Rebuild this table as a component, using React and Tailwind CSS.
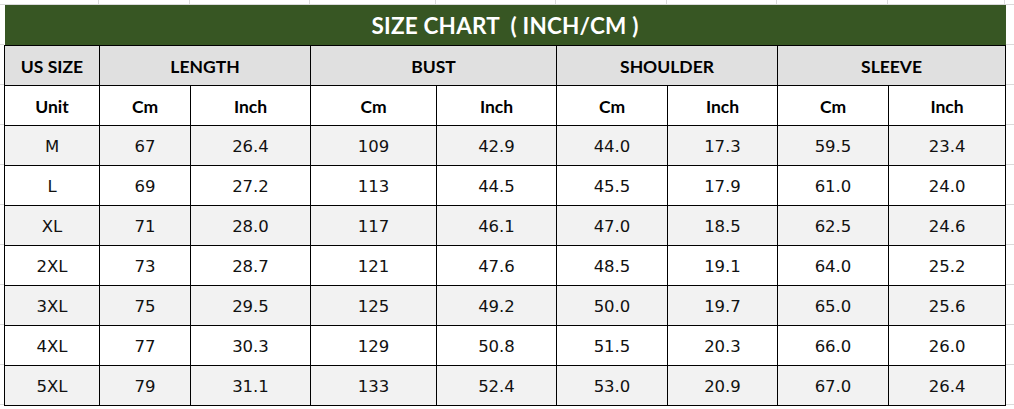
const cols = [95, 91, 120, 126, 120, 111, 110, 111, 117];

const rows = [
  ["M", "67", "26.4", "109", "42.9", "44.0", "17.3", "59.5", "23.4"],
  ["L", "69", "27.2", "113", "44.5", "45.5", "17.9", "61.0", "24.0"],
  ["XL", "71", "28.0", "117", "46.1", "47.0", "18.5", "62.5", "24.6"],
  ["2XL", "73", "28.7", "121", "47.6", "48.5", "19.1", "64.0", "25.2"],
  ["3XL", "75", "29.5", "125", "49.2", "50.0", "19.7", "65.0", "25.6"],
  ["4XL", "77", "30.3", "129", "50.8", "51.5", "20.3", "66.0", "26.0"],
  ["5XL", "79", "31.1", "133", "52.4", "53.0", "20.9", "67.0", "26.4"],
];

const head = "font-['Lato','Open_Sans',sans-serif] font-bold text-[17.5px] text-black";
const data = "font-['DejaVu_Sans','Verdana',sans-serif] text-[16.5px] text-[#111]";
const cell = "border border-black text-center align-middle h-[40px] p-0 pt-[4px]";

export default function App() {
  return (
    <div className="w-[1014px] h-[409px] bg-white overflow-hidden relative bg-[repeating-linear-gradient(to_bottom,transparent_0,transparent_4px,#dadada_4px,#dadada_5px,transparent_5px,transparent_40px)]">
      <div className="flex h-[5px] pl-[4px]">
        {cols.map((w, i) => (
          <div key={i} style={{ width: w }} className="h-full border-r border-[#dadada]" />
        ))}
      </div>
      <div className="pl-[4px]">
        <table className="border-collapse table-fixed w-[1002px] bg-white">
          <colgroup>
            {cols.map((w, i) => (
              <col key={i} style={{ width: w }} />
            ))}
          </colgroup>
          <tbody>
            <tr>
              <td
                colSpan={9}
                className="h-[40px] p-0 pt-[2px] bg-[#375623] text-white text-center border-b border-black font-['Lato','Open_Sans',sans-serif] font-bold text-[22.5px] whitespace-pre tracking-[0.2px]"
              >
                {"SIZE CHART  ( INCH/CM )"}
              </td>
            </tr>
            <tr className="bg-[#e0e0e0]">
              <td className={`${cell} ${head}`}>US SIZE</td>
              <td colSpan={2} className={`${cell} ${head}`}>LENGTH</td>
              <td colSpan={2} className={`${cell} ${head}`}>BUST</td>
              <td colSpan={2} className={`${cell} ${head}`}>SHOULDER</td>
              <td colSpan={2} className={`${cell} ${head}`}>SLEEVE</td>
            </tr>
            <tr className="bg-white">
              {["Unit", "Cm", "Inch", "Cm", "Inch", "Cm", "Inch", "Cm", "Inch"].map((t, i) => (
                <td key={i} className={`${cell} ${head}`}>{t}</td>
              ))}
            </tr>
            {rows.map((r, ri) => (
              <tr key={ri} className={ri % 2 === 0 ? "bg-[#f2f2f2]" : "bg-white"}>
                {r.map((t, i) => (
                  <td key={i} className={`${cell} ${data}`}>{t}</td>
                ))}
              </tr>
            ))}
          </tbody>
        </table>
      </div>
    </div>
  );
}
